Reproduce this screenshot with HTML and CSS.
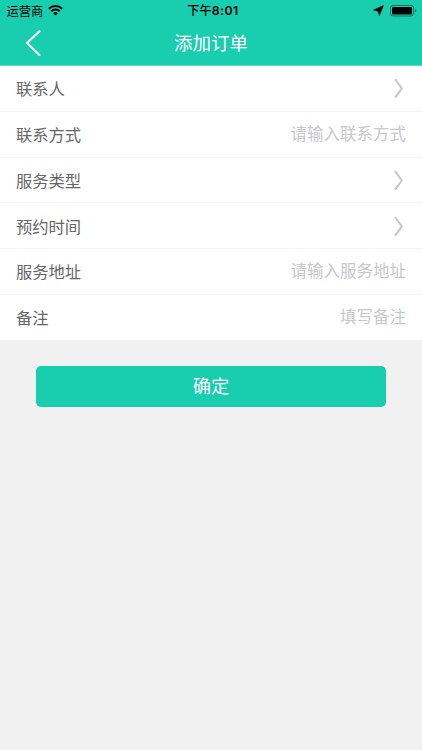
FILE: index.html
```html
<!DOCTYPE html>
<html lang="zh-CN">
<head>
<meta charset="utf-8">
<title>添加订单</title>
<link rel="stylesheet" href="styles.css">
</head>
<body>
<header class="header">
  <div class="status">
    <div class="carrier"><span>运营商</span>
      <svg class="wifi" width="15" height="11" viewBox="0 0 15 11"><path d="M7.5 10.6 5.2 8.2a3.3 3.3 0 0 1 4.6 0z" fill="#000"/><path d="M3.3 6.3a6 6 0 0 1 8.4 0M.9 3.8a9.4 9.4 0 0 1 13.2 0" fill="none" stroke="#000" stroke-width="2"/></svg>
    </div>
    <div class="clock">下午<span class="digits">8:01</span></div>
    <div class="indicators">
      <svg width="11" height="11" viewBox="0 0 11 11"><path d="M10.4.5 6.4 10.5 5.1 6.3.5 5z" stroke="#000" stroke-width=".5"/></svg>
      <svg width="27" height="12" viewBox="0 0 27 12"><rect x=".5" y=".5" width="23" height="10.5" rx="2.6" fill="none" stroke="#000" stroke-opacity=".45"/><rect x="2" y="2" width="20" height="7.5" rx="1"/><path d="M25 4v3.5q1.4-.5 1.4-1.75T25 4z" fill-opacity=".5"/></svg>
    </div>
  </div>
  <nav class="navbar">
    <svg class="back" width="16" height="26" viewBox="0 0 16 26"><path d="M14.5 1.2 2 13l12.5 12" fill="none" stroke="#fff" stroke-width="2.1" stroke-linecap="round"/></svg>
    <h1 class="title">添加订单</h1>
  </nav>
</header>
<main>
  <div class="form">
    <div class="row"><span class="label">联系人</span><svg class="chevron" width="10" height="20" viewBox="0 0 10 20"><path d="m1.5 1.7 6.3 8.7-6.3 8.7"/></svg></div>
    <div class="row"><span class="label">联系方式</span><span class="hint">请输入联系方式</span></div>
    <div class="row"><span class="label">服务类型</span><svg class="chevron" width="10" height="20" viewBox="0 0 10 20"><path d="m1.5 1.7 6.3 8.7-6.3 8.7"/></svg></div>
    <div class="row"><span class="label">预约时间</span><svg class="chevron" width="10" height="20" viewBox="0 0 10 20"><path d="m1.5 1.7 6.3 8.7-6.3 8.7"/></svg></div>
    <div class="row"><span class="label">服务地址</span><span class="hint">请输入服务地址</span></div>
    <div class="row"><span class="label">备注</span><span class="hint">填写备注</span></div>
  </div>
  <button class="submit">确定</button>
</main>
</body>
</html>
```
FILE: styles.css
```css
* { box-sizing: border-box; }
body {
  margin: 0;
  min-height: 750px;
  background: #f1f1f1;
  font-family: "Noto Sans CJK SC", sans-serif;
}
.header { height: 66px; background: #19cdaf; border-bottom: 1px solid #5edcc7; }
.status {
  display: grid;
  grid-template-columns: 1fr auto 1fr;
  align-items: center;
  height: 21px;
  padding: 0 5px 0 6.5px;
  font-size: 12.3px;
  line-height: 20px;
  color: #000;
}
.carrier { display: flex; align-items: center; gap: 5px; }
.clock { padding-left: 2.5px; font-size: 12.2px; font-weight: 500; line-height: 20px; white-space: nowrap; }
.digits { font: 600 12.3px/20px Inter, sans-serif; letter-spacing: .45px; }
.indicators { display: flex; align-items: center; justify-content: flex-end; gap: 6px; }
.navbar {
  display: grid;
  grid-template-columns: 1fr auto 1fr;
  align-items: center;
  height: 44px;
}
.back { margin-left: 25px; }
.title { margin: -2px 0 0; font-size: 18.5px; font-weight: 400; color: #fff; }
.form { height: 274px; background: #fff; }
.row {
  display: flex;
  align-items: center;
  justify-content: space-between;
  height: 45.75px;
  padding: 0 16px;
  border-bottom: 1px solid #f5f5f5;
  font-size: 16.5px;
}
.row:last-child { border-bottom: 0; height: 45px; }
.label { color: #666; font-size: 16.3px; font-weight: 400; }
.hint { color: #c7c7cd; font-weight: 400; padding-bottom: 2px; }
.chevron { margin-right: 2px; fill: none; stroke: #c7c7cc; stroke-width: 2; stroke-linecap: round; }
.submit {
  display: block;
  width: 350px;
  height: 40.5px;
  margin: 26px auto 0;
  padding: 0 0 2px;
  border: 0;
  border-radius: 5px;
  background: #19cdaf;
  color: #fff;
  font: 400 18.3px/38px "Noto Sans CJK SC", sans-serif;
}
```
